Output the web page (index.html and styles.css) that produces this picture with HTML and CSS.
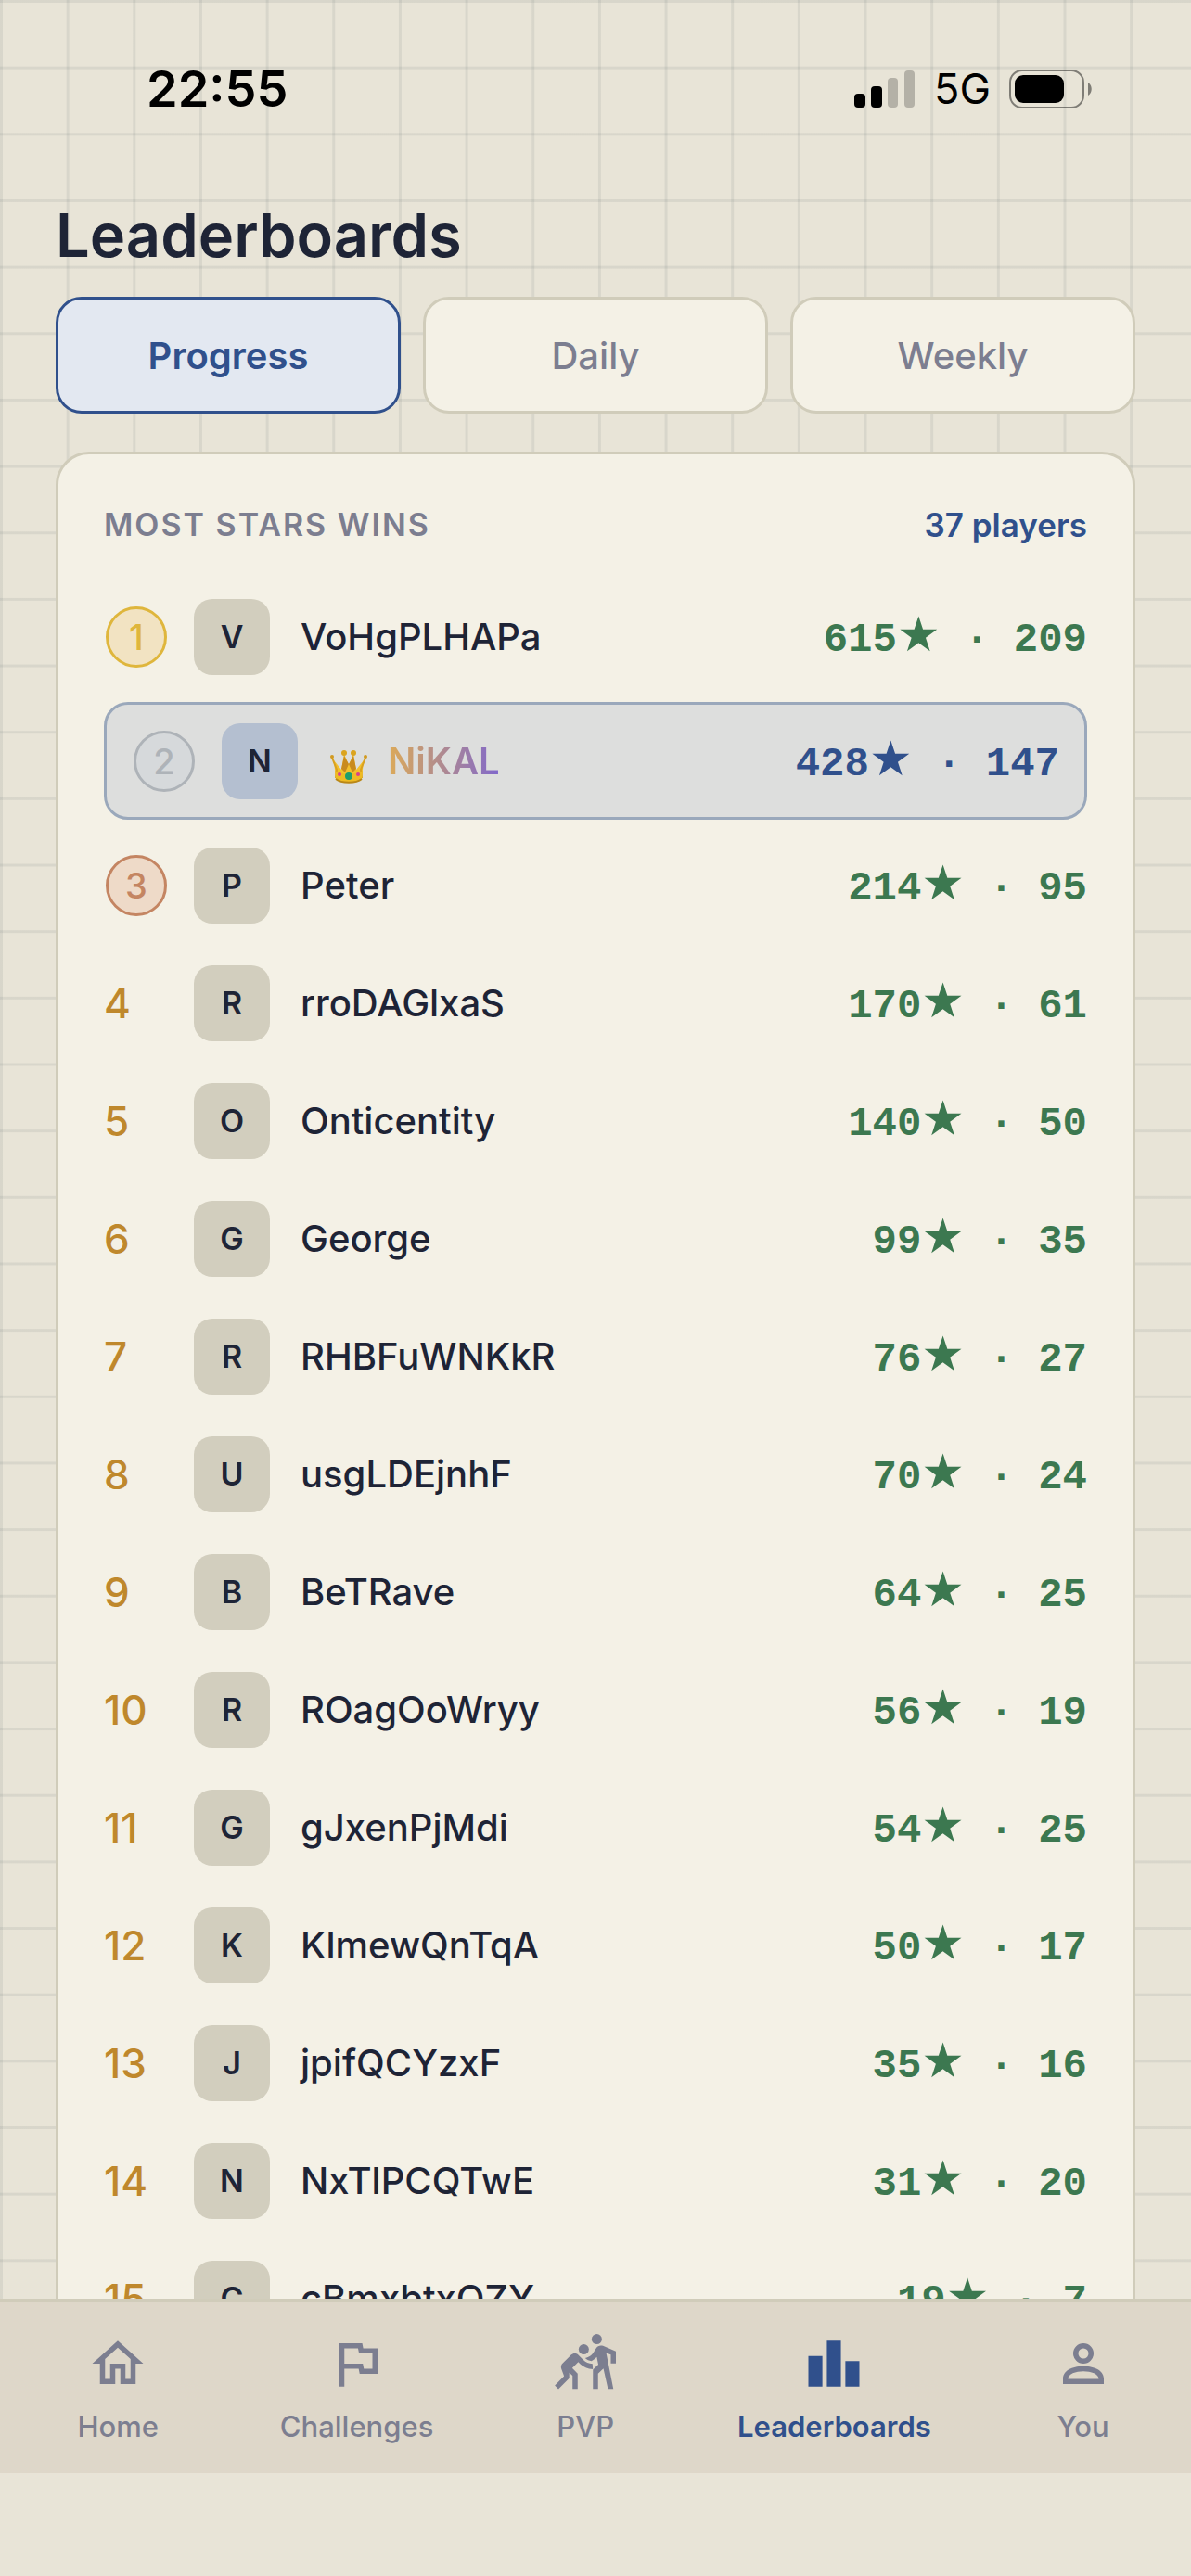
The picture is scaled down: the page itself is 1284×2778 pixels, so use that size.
FILE: index.html
```html
<!DOCTYPE html>
<html lang="en">
<head>
  <meta charset="UTF-8">
  <meta name="viewport" content="width=device-width, initial-scale=1.0">
  <title>Leaderboards</title>
  <link rel="stylesheet" href="styles.css">
</head>
<body>
  <div class="screen">
    <div class="status-bar">
      <span class="time">22:55</span>
      <div class="status-icons">
        <svg class="signal" viewBox="0 0 66 42" aria-hidden="true">
          <rect x="0" y="26" width="12" height="15" rx="4"/>
          <rect x="18" y="18" width="12" height="23" rx="4"/>
          <g opacity="0.22">
            <rect x="36" y="9" width="11" height="32" rx="4"/>
            <rect x="54" y="1" width="11" height="40" rx="4"/>
          </g>
        </svg>
        <span class="network">5G</span>
        <svg class="battery" viewBox="0 0 90 42" aria-hidden="true">
          <rect x="1" y="1" width="79" height="40" rx="13" fill="none" stroke="#000" stroke-opacity="0.45" stroke-width="2"/>
          <rect x="6" y="6" width="53" height="30" rx="9"/>
          <path d="M85 14c5 3 5 11 0 14z" opacity="0.45"/>
        </svg>
      </div>
    </div>

    <main class="content">
      <h1 class="title">Leaderboards</h1>
      <div class="tabs">
        <button class="tab active" type="button">Progress</button>
        <button class="tab" type="button">Daily</button>
        <button class="tab" type="button">Weekly</button>
      </div>

      <section class="card">
        <div class="card-header">
          <h2 class="card-title">Most stars wins</h2>
          <span class="player-count">37 players</span>
        </div>
        <ol class="rows">
          <li class="row">
            <span class="rank"><span class="medal gold">1</span></span>
            <span class="avatar">V</span>
            <span class="name">VoHgPLHAPa</span>
            <span class="score">615<span class="star">★</span> · 209</span>
          </li>
          <li class="row me">
            <span class="rank"><span class="medal silver">2</span></span>
            <span class="avatar">N</span>
            <span class="name">
              <svg class="crown" viewBox="0 0 44 38" aria-hidden="true">
                <path d="M6 13l8 10 3-17 5 12 5-12 3 17 8-10-2 20c-6 5-22 5-28 0z" fill="#f3c02c"/>
                <path d="M14 22l3-14 5 9-4 9zM30 22l-3-14-5 9 4 9z" fill="#c98a1d"/>
                <path d="M4 10l5 13-1 9M40 10l-5 13 1 9" fill="none" stroke="#d9a11f" stroke-width="2"/>
                <path d="M7 24c7 5 23 5 30 0l-1 9c-6 5-22 5-28 0z" fill="#eebb22"/>
                <path d="M8 33c6 5 22 5 28 0" fill="none" stroke="#b98717" stroke-width="2"/>
                <circle cx="4" cy="9" r="2" fill="#d19a20"/>
                <circle cx="40" cy="9" r="2" fill="#d19a20"/>
                <circle cx="17" cy="5" r="3" fill="#dba41f"/>
                <circle cx="27" cy="5" r="3" fill="#dba41f"/>
                <circle cx="22" cy="30" r="4" fill="#1f9e6c"/>
                <circle cx="12" cy="28" r="2" fill="#d6408c"/>
                <circle cx="32" cy="28" r="2" fill="#d6408c"/>
              </svg>
              <span class="fancy-name">NiKAL</span>
            </span>
            <span class="score">428<span class="star">★</span> · 147</span>
          </li>
          <li class="row">
            <span class="rank"><span class="medal bronze">3</span></span>
            <span class="avatar">P</span>
            <span class="name">Peter</span>
            <span class="score">214<span class="star">★</span> · 95</span>
          </li>
          <li class="row">
            <span class="rank">4</span>
            <span class="avatar">R</span>
            <span class="name">rroDAGlxaS</span>
            <span class="score">170<span class="star">★</span> · 61</span>
          </li>
          <li class="row">
            <span class="rank">5</span>
            <span class="avatar">O</span>
            <span class="name">Onticentity</span>
            <span class="score">140<span class="star">★</span> · 50</span>
          </li>
          <li class="row">
            <span class="rank">6</span>
            <span class="avatar">G</span>
            <span class="name">George</span>
            <span class="score">99<span class="star">★</span> · 35</span>
          </li>
          <li class="row">
            <span class="rank">7</span>
            <span class="avatar">R</span>
            <span class="name">RHBFuWNKkR</span>
            <span class="score">76<span class="star">★</span> · 27</span>
          </li>
          <li class="row">
            <span class="rank">8</span>
            <span class="avatar">U</span>
            <span class="name">usgLDEjnhF</span>
            <span class="score">70<span class="star">★</span> · 24</span>
          </li>
          <li class="row">
            <span class="rank">9</span>
            <span class="avatar">B</span>
            <span class="name">BeTRave</span>
            <span class="score">64<span class="star">★</span> · 25</span>
          </li>
          <li class="row">
            <span class="rank">10</span>
            <span class="avatar">R</span>
            <span class="name">ROagOoWryy</span>
            <span class="score">56<span class="star">★</span> · 19</span>
          </li>
          <li class="row">
            <span class="rank">11</span>
            <span class="avatar">G</span>
            <span class="name">gJxenPjMdi</span>
            <span class="score">54<span class="star">★</span> · 25</span>
          </li>
          <li class="row">
            <span class="rank">12</span>
            <span class="avatar">K</span>
            <span class="name">KlmewQnTqA</span>
            <span class="score">50<span class="star">★</span> · 17</span>
          </li>
          <li class="row">
            <span class="rank">13</span>
            <span class="avatar">J</span>
            <span class="name">jpifQCYzxF</span>
            <span class="score">35<span class="star">★</span> · 16</span>
          </li>
          <li class="row">
            <span class="rank">14</span>
            <span class="avatar">N</span>
            <span class="name">NxTlPCQTwE</span>
            <span class="score">31<span class="star">★</span> · 20</span>
          </li>
          <li class="row">
            <span class="rank">15</span>
            <span class="avatar">C</span>
            <span class="name">cBmxbtxQZY</span>
            <span class="score">19<span class="star">★</span> · 7</span>
          </li>
        </ol>
      </section>
    </main>
  </div>

  <nav class="bottom-nav">
    <a class="nav-item" href="#home">
      <svg class="nav-icon" viewBox="0 0 24 24" aria-hidden="true"><path d="M12 5.69l5 4.5V18h-2v-6H9v6H7v-7.81l5-4.5M12 3L2 12h3v8h6v-6h2v6h6v-8h3L12 3z"/></svg>
      <span>Home</span>
    </a>
    <a class="nav-item" href="#challenges">
      <svg class="nav-icon" viewBox="0 0 24 24" aria-hidden="true"><path d="M12.360 6l.4 2H18v6h-3.360l-.4-2H7V6h5.360M14 4H5v17h2v-7h5.600l.4 2h7V6h-5.600L14 4z"/></svg>
      <span>Challenges</span>
    </a>
    <a class="nav-item" href="#pvp">
      <svg class="nav-icon" viewBox="0 0 24 24" aria-hidden="true">
        <circle cx="16.5" cy="2.38" r="2"/>
        <path d="M24 11.88v-4.7l-5.05-2.14c-.97-.41-2.09-.06-2.65.84l-1 1.6c-.67 1.18-1.91 2.06-3.41 2.32l.06.06c.69.69 1.52 1.07 2.46 1.17.8-.42 1.52-.98 2.09-1.64l.6 3-1.16 1.1-.94.89v7.5h2v-6l2.1-2 1.8 8H23l-2.18-11-.62-3.1 1.8.7v3.4h2z"/>
        <circle cx="11.4" cy="6.4" r="2"/>
        <path d="M11.24 10.56l-2-2c-.1-.1-.2-.18-.31-.26-.22-.14-.47-.24-.72-.28-.13-.03-.25-.04-.38-.04-.51 0-1.02.2-1.41.59l-3.34 3.34c-.41.41-.62.98-.58 1.54 0 .18.04.37.11.55l1.07 2.95-3.63 3.63L1.46 22l4.24-4.24v-2.22L7 16.75v5.13h2v-6l-2.12-2.12 2.36-2.36.71.71c1.29 1.26 2.97 2.04 5.03 2.04l-.14-2.07c-1.5-.02-2.7-.62-3.6-1.52z"/>
      </svg>
      <span>PVP</span>
    </a>
    <a class="nav-item active" href="#leaderboards" aria-current="page">
      <svg class="nav-icon" viewBox="0 0 24 24" aria-hidden="true"><path d="M7.5 21H2V9h5.5v12zm7.25-18h-5.5v18h5.5V3zM22 11h-5.5v10H22V11z"/></svg>
      <span>Leaderboards</span>
    </a>
    <a class="nav-item" href="#you">
      <svg class="nav-icon" viewBox="0 0 24 24" aria-hidden="true"><path d="M12 6a2 2 0 1 1 0 4 2 2 0 0 1 0-4m0 9c3 0 6 1 6 3H6c0-2 3-3 6-3m0-11a4 4 0 1 0 0 8 4 4 0 0 0 0-8zm0 9c-3 0-8 1-8 5v2h16v-2c0-4-5-5-8-5z"/></svg>
      <span>You</span>
    </a>
  </nav>
</body>
</html>
```
FILE: styles.css
```css
* {
  margin: 0;
  padding: 0;
  box-sizing: border-box;
}
body {
  display: flex;
  flex-direction: column;
  height: 100vh;
  padding-bottom: 111px;
  font-family: Inter, 'Liberation Sans', sans-serif;
  background: #e8e4d7;
  color: #1e2436;
}
.screen {
  --cell: calc(100vw * 24 / 430);
  flex: 1;
  min-height: 0;
  overflow: hidden;
  background-image:
    linear-gradient(rgba(110, 120, 120, 0.13) 3px, transparent 3px),
    linear-gradient(90deg, rgba(110, 120, 120, 0.13) 3px, transparent 3px);
  background-size: var(--cell) var(--cell);
}

/* status bar */
.status-bar {
  display: flex;
  align-items: center;
  justify-content: space-between;
  padding: 64px 106px 64px 158px;
  color: #000;
}
.time {
  font-size: 54px;
  line-height: 64px;
  font-weight: 600;
}
.status-icons {
  display: flex;
  align-items: center;
}
.signal {
  width: 66px;
  height: 42px;
}
.network {
  margin: 0 20px;
  font-size: 45px;
  line-height: 64px;
}
.battery {
  width: 90px;
  height: 42px;
}

/* page */
.content {
  padding: 22px 60px 0;
}
.title {
  font-size: 65px;
  line-height: 80px;
  font-weight: 600;
}
.tabs {
  display: grid;
  grid-template-columns: repeat(3, 1fr);
  gap: 24px;
  margin: 26px 0 41px;
}
.tab {
  height: 126px;
  border: 3px solid #d0ccba;
  border-radius: 28px;
  background: #f4f1e6;
  color: #7c7e90;
  font-family: inherit;
  font-size: 40px;
  font-weight: 500;
}
.tab.active {
  border-color: #30508c;
  background: #e3e8f1;
  color: #30508c;
  font-weight: 600;
}
.card {
  padding: 52px 49px;
  border: 3px solid #d0ccba;
  border-radius: 36px;
  background: #f4f1e6;
}
.card-header {
  display: flex;
  align-items: center;
  justify-content: space-between;
  margin-bottom: 33px;
  font-size: 35px;
  line-height: 48px;
  font-weight: 600;
}
.card-title {
  font-size: 34px;
  font-weight: 600;
  letter-spacing: 2px;
  text-transform: uppercase;
  color: #7c7e90;
}
.player-count {
  color: #30508c;
}

/* leaderboard rows */
.rows {
  list-style: none;
}
.row {
  display: grid;
  grid-template-columns: 70px 82px 1fr auto;
  column-gap: 27px;
  align-items: center;
  height: 127px;
}
.rank {
  font-size: 44px;
  font-weight: 500;
  color: #bf882c;
}
.medal {
  display: flex;
  align-items: center;
  justify-content: center;
  width: 66px;
  height: 66px;
  margin-left: 2px;
  border: 3px solid;
  border-radius: 50%;
  font-size: 38px;
}
.gold {
  color: #dfb63c;
  background: #f2e3c2;
}
.silver {
  color: #aeb3b8;
  background: #d6d9db;
}
.bronze {
  color: #c48562;
  background: #eedac8;
}
.avatar {
  width: 82px;
  height: 82px;
  border-radius: 20px;
  background: #d2cebe;
  font-size: 34px;
  line-height: 82px;
  font-weight: 600;
  text-align: center;
}
.name {
  display: flex;
  align-items: center;
  gap: 20px;
  padding-left: 6px;
  font-size: 40px;
  font-weight: 500;
}
.score {
  font-family: 'Liberation Mono', monospace;
  font-size: 44px;
  font-weight: 700;
  white-space: pre;
  color: #3c7850;
}
.star {
  font-family: 'DejaVu Sans', sans-serif;
  font-size: 52px;
  line-height: 1;
  font-weight: 400;
}
.me {
  margin: 7px 0;
  padding: 0 27px;
  border: 3px solid #9aa8bb;
  border-radius: 26px;
  background: #dddedd;
}
.me .avatar {
  background: #b4bfd0;
}
.me .score {
  color: #30508c;
}
.crown {
  width: 44px;
  height: 38px;
  margin-top: 10px;
}
.fancy-name {
  font-weight: 600;
  background: linear-gradient(90deg, #dcaa58, #8068cc);
  background-clip: text;
  -webkit-background-clip: text;
  color: transparent;
}

/* bottom navigation */
.bottom-nav {
  display: flex;
  justify-content: space-around;
  padding: 34px 18px 31px;
  border-top: 3px solid #d0ccba;
  background: #ded7c9;
}
.nav-item {
  display: flex;
  flex-direction: column;
  align-items: center;
  gap: 16px;
  color: #7c7e90;
  font-size: 31px;
  line-height: 38px;
  font-weight: 500;
  text-decoration: none;
}
.nav-item.active {
  color: #30508c;
  font-weight: 600;
}
.nav-icon {
  width: 66px;
  height: 66px;
  fill: currentColor;
}
```
